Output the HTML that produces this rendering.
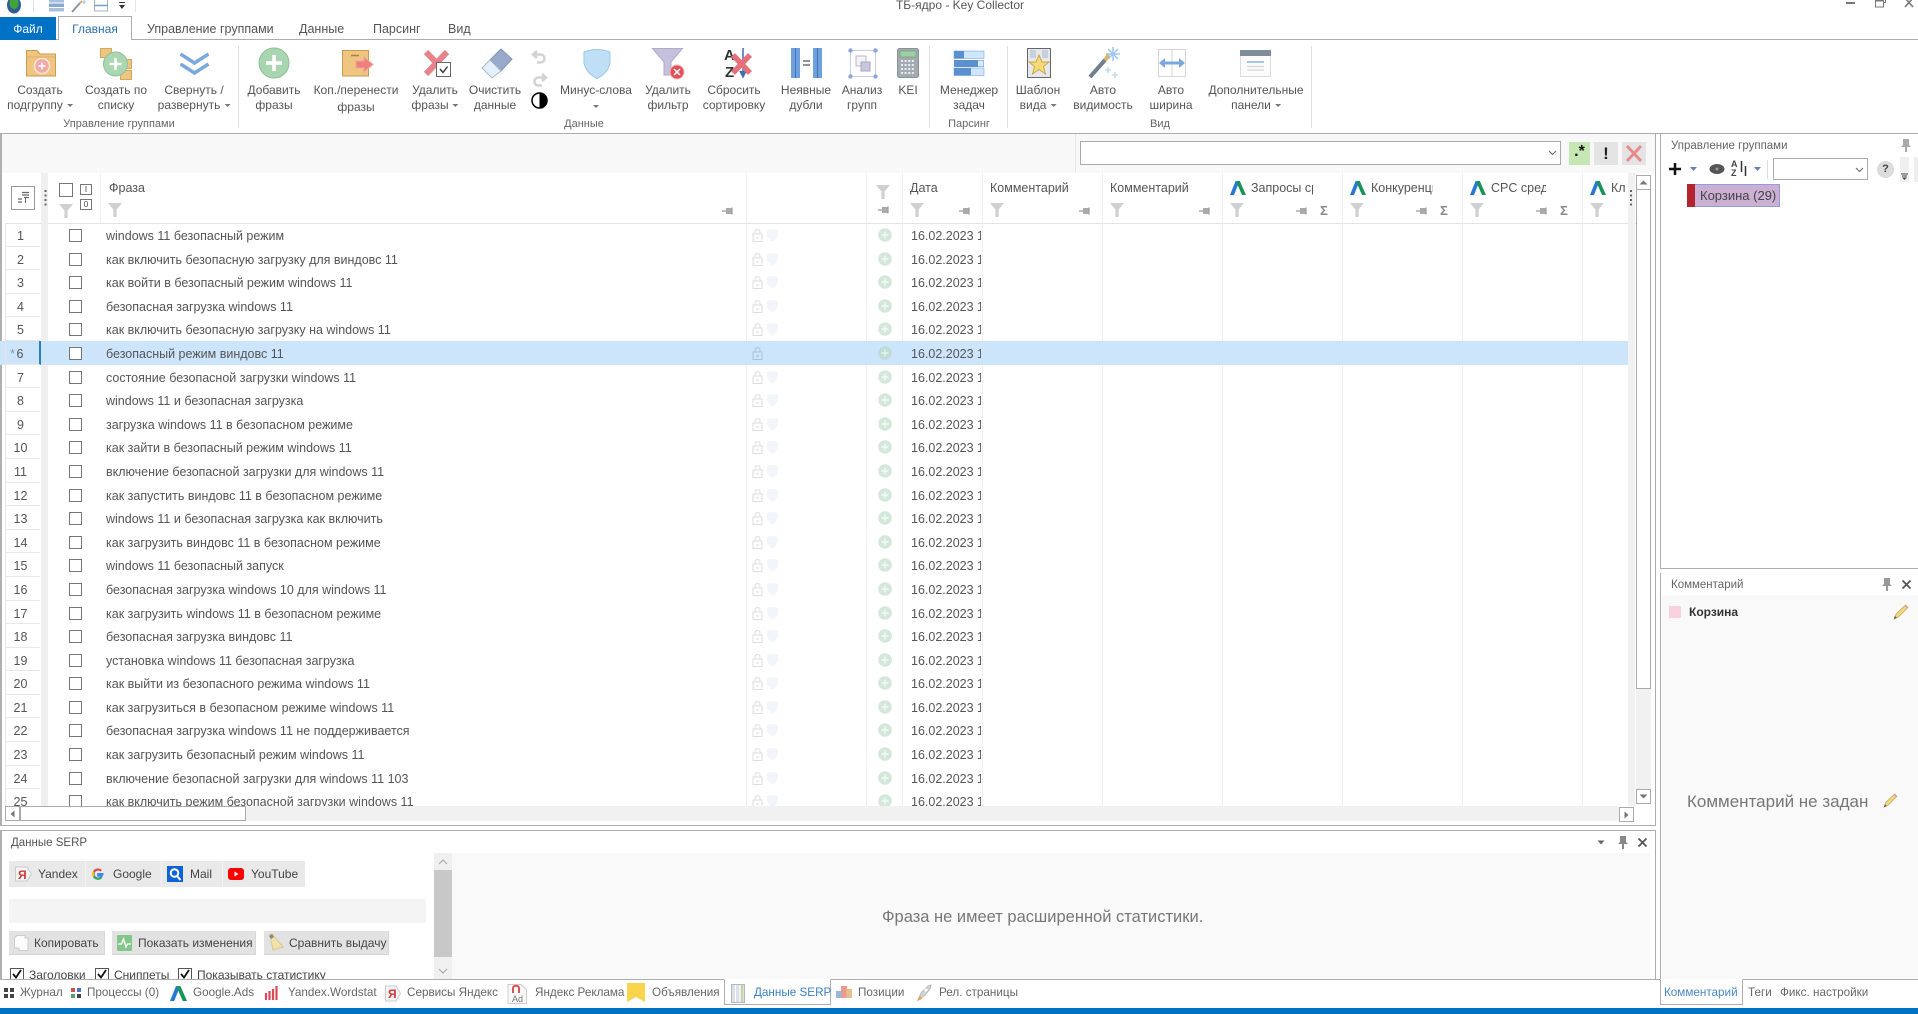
<!DOCTYPE html>
<html lang="ru"><head><meta charset="utf-8"><title>ТБ-ядро - Key Collector</title>
<style>
*{box-sizing:border-box}
html,body{margin:0;padding:0;width:1918px;height:1014px;overflow:hidden;background:#fff;font-family:"Liberation Sans","Noto Sans CJK SC",sans-serif;font-size:12.5px;color:#555}
.a{position:absolute}
.t{position:absolute;white-space:nowrap;line-height:16px}
.u{font-size:11.7px;color:#666}
.w{font-size:12px;color:#444}
.c{transform:translateX(-50%)}
.rl{position:absolute;white-space:nowrap;line-height:16px;transform:translateX(-50%);text-align:center;font-size:12px;color:#555}
.ar{display:inline-block;width:0;height:0;border-left:3px solid transparent;border-right:3px solid transparent;border-top:3px solid #777;vertical-align:middle;margin-left:4px}
svg{position:absolute;overflow:visible}
.h{position:absolute;white-space:nowrap;line-height:16px;font-size:12.5px;color:#555}
.vl{position:absolute;width:1px;background:#f0f0f0}
.btn{position:absolute;background:#e2e2e2;border-bottom:1px solid #d2d2d2;border-right:1px solid #d8d8d8}
#rows{position:absolute;left:0;top:223px;width:1628px;height:583px;overflow:hidden}
.r{position:relative;height:23.6px;width:1628px}
.r .n{position:absolute;left:5px;top:0;width:35px;height:100%;border-bottom:1px solid #e8e8e8;border-left:1px solid #e6e6e6;text-align:center;line-height:26.5px;padding-right:5px;font-size:12.5px;color:#555}
.r .b{position:absolute;left:69px;top:6px;width:13px;height:13px;border:1px solid #777;background:#fff}
.r .p{position:absolute;left:106px;top:0;line-height:26.5px;font-size:12.5px;color:#555;white-space:nowrap}
.r .d{position:absolute;left:911px;top:0;width:70px;overflow:hidden;line-height:26.5px;font-size:12.5px;color:#555;white-space:nowrap}
.r svg.lk{left:752px;top:5px}
.r svg.sh{left:767px;top:5px}
.r svg.pl{left:878px;top:5px}
.s{background:#cde5fb}
.s .n{background:#cde5fb;border-right:2px solid #2f7eb5;width:36px}
</style></head><body>
<svg width="0" height="0" style="position:absolute"><defs>
<symbol id="fl" viewBox="0 0 14 14"><path d="M0 0H14L8.600 6.500V14H5.400V6.500Z" fill="#d0d0d0"/></symbol>
<symbol id="pn" viewBox="0 0 12 10"><path d="M0 5H4M10 1.500V8.500" fill="none" stroke="#9a9a9a" stroke-width="1.200"/><path d="M4 2H9.500V8H4Z" fill="#aaa"/></symbol>
<symbol id="ad" viewBox="0 0 16 16"><path d="M5.600 1H9.600L4 15H0Z" fill="#2a78d6"/><path d="M5.900 1H9.800L16 15H12Z" fill="#17945a"/></symbol>
<symbol id="lk" viewBox="0 0 11 14"><path d="M3 6V3.500C3 1 8 1 8 3.500V6" fill="none" stroke="#dedede"/><rect x="1" y="6" width="9" height="7.500" fill="none" stroke="#dedede"/><rect x="4.500" y="9" width="2" height="2" fill="#e4e4e4"/></symbol>
<symbol id="lks" viewBox="0 0 11 14"><path d="M3 6V3.500C3 1 8 1 8 3.500V6" fill="none" stroke="#a9c4d8"/><rect x="1" y="6" width="9" height="7.500" fill="none" stroke="#a9c4d8"/><rect x="4.500" y="9" width="2" height="2" fill="#a9c4d8"/></symbol>
<symbol id="sh" viewBox="0 0 11 14"><path d="M0 2Q5.500 0 11 2V7Q10 11 5.500 14Q1 11 0 7Z" fill="#f2f6fb"/></symbol>
<symbol id="pl" viewBox="0 0 14 14"><circle cx="7" cy="7" r="6.800" fill="#d3e8da"/><path d="M7 3.500V10.500M3.500 7H10.500" stroke="#f2faf4" stroke-width="1.400"/></symbol>
<symbol id="pls" viewBox="0 0 14 14"><circle cx="7" cy="7" r="6.800" fill="#bcdcd4"/><path d="M7 3.500V10.500M3.500 7H10.500" stroke="#e4f4f4" stroke-width="1.400"/></symbol>
<symbol id="pc" viewBox="0 0 16 16"><path d="M1 15L3 10L12.500 1L15 3.500L5.500 13Z" fill="#f2d67a" stroke="#b9a468" stroke-width=".7"/><path d="M1 15L2 12L4 14Z" fill="#555"/><path d="M12.500 1L15 3.500L14 4.500L11.500 2Z" fill="#e79aa8"/></symbol>
</defs></svg>

<!-- Title bar -->
<svg style="left:6px;top:-3px" width="16" height="17"><ellipse cx="8" cy="8" rx="7" ry="8.500" fill="#2f5f90"/><ellipse cx="8" cy="6" rx="4.500" ry="6" fill="#3fa53a"/></svg>
<div class="vl" style="left:33px;top:0;height:12px;background:#e2e2e2"></div>
<svg style="left:49px;top:0" width="16" height="12"><rect y="-1" width="15" height="3.500" fill="#a9bfdc"/><rect y="3.500" width="15" height="3.500" fill="#8aa9d2"/><rect y="8" width="15" height="3.500" fill="#a9bfdc"/></svg>
<svg style="left:71px;top:0" width="16" height="13"><path d="M1 12L9 3" stroke="#8a96a2" stroke-width="2"/><path d="M9 3L11 1" stroke="#e0b060" stroke-width="2"/><path d="M13 0V4M11 2H15" stroke="#9cc4e8"/></svg>
<svg style="left:94px;top:0" width="14" height="12"><rect x=".5" y="-1" width="13" height="12" fill="#fff" stroke="#a5b4c8"/><path d="M0 5.500H14" stroke="#7d9fcc" stroke-width="1.500"/></svg>
<svg style="left:118px;top:1px" width="8" height="9"><path d="M1 1.500H7" stroke="#333"/><path d="M1 4H7L4 8Z" fill="#333"/></svg>
<div class="vl" style="left:135px;top:0;height:12px;background:#e8e8e8"></div>
<div class="t c" style="left:960px;top:-3px;color:#555;font-size:12px">ТБ-ядро - Key Collector</div>
<div class="a" style="left:1846px;top:2px;width:9px;height:2px;background:#777"></div>
<svg style="left:1875px;top:0" width="11" height="8"><rect x=".5" y="-3" width="8" height="10" fill="#fff" stroke="#777"/><path d="M0 0.500H8.500" stroke="#777" stroke-width="2"/><path d="M9 2.500H10.500V-2" fill="none" stroke="#777"/></svg>
<svg style="left:1904px;top:0" width="10" height="8"><path d="M1 -2L9 7M9 -2L1 7" stroke="#777" stroke-width="1.600"/></svg>

<!-- Tabs -->
<div class="a" style="left:0;top:39px;width:1918px;height:1px;background:#adadad"></div>
<div class="a" style="left:0;top:17px;width:56px;height:23px;background:#0072c6;color:#fff;text-align:center;line-height:24px;font-size:12px">Файл</div>
<div class="a" style="left:58px;top:16px;width:74px;height:24px;background:#fff;border:1px solid #adadad;border-bottom:0;color:#2b6fb0;text-align:center;line-height:25px;font-size:12px">Главная</div>
<div class="t" style="left:147px;top:21px">Управление группами</div>
<div class="t" style="left:299px;top:21px">Данные</div>
<div class="t" style="left:373px;top:21px">Парсинг</div>
<div class="t" style="left:448px;top:21px">Вид</div>

<!-- Ribbon -->
<div class="a" style="left:0;top:133px;width:1918px;height:1px;background:#adadad"></div>
<div class="vl" style="left:238px;top:46px;height:82px;background:#dedede"></div>
<div class="vl" style="left:929px;top:46px;height:82px;background:#dedede"></div>
<div class="vl" style="left:1007px;top:46px;height:82px;background:#dedede"></div>
<div class="vl" style="left:1311px;top:46px;height:82px;background:#dedede"></div>

<!-- 1 -->
<svg style="left:26px;top:50px" width="30" height="27"><path d="M.5 26V.5H11L14 4H29.500V26Z" fill="#efc580" stroke="#c79a55"/><path d="M.5 7H29.500" stroke="#d9ae68"/><circle cx="16" cy="16" r="7.500" fill="#f3a9a6" stroke="#fbe6d8" stroke-width="1.500"/><path d="M16 12.500V19.500M12.500 16H19.500" stroke="#fff" stroke-width="1.500"/></svg>
<div class="rl" style="left:40px;top:82px">Создать<br></div><div class="rl" style="left:40px;top:97px">подгруппу<i class="ar"></i></div>
<!-- 2 -->
<svg style="left:100px;top:48px" width="34" height="32"><rect x=".5" y=".5" width="11" height="9" fill="#efc580" stroke="#d2a760"/><rect x="21.500" y="11.500" width="10" height="9" fill="#efc580" stroke="#d2a760"/><rect x="20.500" y="22.500" width="11" height="9" fill="#efc580" stroke="#d2a760"/><circle cx="15.500" cy="16" r="12" fill="#abd6b2" stroke="#92c09b"/><path d="M15.500 10V22M9.500 16H21.500" stroke="#fff" stroke-width="2.500"/></svg>
<div class="rl" style="left:116px;top:82px">Создать по</div><div class="rl" style="left:116px;top:97px">списку</div>
<!-- 3 -->
<svg style="left:179px;top:52px" width="31" height="23"><path d="M1.500 2L15.500 11L29.500 2M1.500 12L15.500 21L29.500 12" fill="none" stroke="#7ba8dd" stroke-width="3.500"/></svg>
<div class="rl" style="left:194px;top:82px">Свернуть /</div><div class="rl" style="left:194px;top:97px">развернуть<i class="ar"></i></div>
<!-- 4 -->
<svg style="left:258px;top:47px" width="32" height="32"><circle cx="16" cy="16" r="15" fill="#a9d6b0" stroke="#8ebf98"/><path d="M16 8V24M8 16H24" stroke="#fff" stroke-width="3.500"/></svg>
<div class="rl" style="left:274px;top:82px">Добавить</div><div class="rl" style="left:274px;top:97px">фразы</div>
<!-- 5 -->
<svg style="left:342px;top:50px" width="32" height="27"><rect x=".5" y=".5" width="26" height="25.500" fill="#efc580" stroke="#c79a55"/><path d="M9 5.500H17" stroke="#a88148" stroke-width="1.500"/><path d="M14 11H22V7L31 14.500L22 22V18H14Z" fill="#f0807c" stroke="#e9a7a2"/></svg>
<div class="rl" style="left:356px;top:82px">Коп./перенести</div><div class="rl" style="left:356px;top:99px">фразы</div>
<!-- 6 -->
<svg style="left:423px;top:50px" width="29" height="28"><path d="M3 2L24 24M24 2L3 24" stroke="#e9838b" stroke-width="6"/><rect x="13.500" y="12.500" width="14" height="14" fill="#fff" stroke="#666"/><path d="M17 19L20 22.500L24.500 16.500" fill="none" stroke="#333" stroke-width="1.400"/></svg>
<div class="rl" style="left:435px;top:82px">Удалить</div><div class="rl" style="left:435px;top:97px">фразы<i class="ar"></i></div>
<!-- 7 -->
<svg style="left:481px;top:48px" width="32" height="31"><path d="M20 1L31 11L20 23L9 12Z" fill="#98aac9" stroke="#8596b2"/><path d="M9 12L20 23L11 30L1 20Z" fill="#e4f1fb" stroke="#a8b8cc"/></svg>
<div class="rl" style="left:495px;top:82px">Очистить</div><div class="rl" style="left:495px;top:97px">данные</div>
<!-- 8 -->
<svg style="left:531px;top:50px" width="17" height="14"><path d="M6 1L2 4.500L6 8M2 4.500H9C15 4.500 15 12.500 9 12.500H6" fill="none" stroke="#d2d2d2" stroke-width="2.500"/></svg>
<svg style="left:531px;top:73px" width="17" height="14"><path d="M11 1L15 4.500L11 8M15 4.500H8C2 4.500 2 12.500 8 12.500H11" fill="none" stroke="#d2d2d2" stroke-width="2.500"/></svg>
<svg style="left:531px;top:92px" width="17" height="17"><circle cx="8.500" cy="8.500" r="7.500" fill="#fff" stroke="#000" stroke-width="1.500"/><path d="M8.500 1A7.500 7.500 0 0 1 8.500 16Z" fill="#000"/></svg>
<!-- 9 -->
<svg style="left:583px;top:48px" width="28" height="31"><path d="M1 4Q14 -1 27 4V15Q25 25 14 30.500Q3 25 1 15Z" fill="#bfdff6" stroke="#9dc8e6"/></svg>
<div class="rl" style="left:596px;top:82px">Минус-слова</div><div class="a" style="left:593px;top:105px"><i class="ar" style="margin:0;display:block"></i></div>
<!-- 10 -->
<svg style="left:652px;top:48px" width="32" height="32"><path d="M.5 .5H30.500L19 14V27H12V14Z" fill="#c5c1dc" stroke="#aeaac8"/><circle cx="25" cy="24" r="7" fill="#e0505a" stroke="#f2b4b4"/><path d="M22 21L28 27M28 21L22 27" stroke="#fff" stroke-width="1.500"/></svg>
<div class="rl" style="left:668px;top:82px">Удалить</div><div class="rl" style="left:668px;top:97px">фильтр</div>
<!-- 11 -->
<svg style="left:724px;top:47px" width="30" height="32"><text x="0" y="13" font-family="Liberation Sans" font-weight="bold" font-size="15" fill="#333">A</text><text x="1" y="30" font-family="Liberation Sans" font-weight="bold" font-size="15" fill="#333">Z</text><path d="M19 1V28M16 24L19 30L22 24" stroke="#3f6fb0" fill="#3f6fb0" stroke-width="1.500"/><path d="M9 8L26 26M26 8L9 26" stroke="#e5707a" stroke-width="5.500"/></svg>
<div class="rl" style="left:734px;top:82px">Сбросить</div><div class="rl" style="left:734px;top:97px">сортировку</div>
<!-- 12 -->
<svg style="left:791px;top:48px" width="31" height="30"><rect width="9" height="30" fill="#6ea0de"/><rect x="22" width="9" height="30" fill="#6ea0de"/><path d="M4.500 0V30M26.500 0V30" stroke="#3c6fb4" stroke-width=".9"/><path d="M12 13H19M12 17H19" stroke="#555" stroke-width="1.300"/></svg>
<div class="rl" style="left:806px;top:82px">Неявные</div><div class="rl" style="left:806px;top:97px">дубли</div>
<!-- 13 -->
<svg style="left:848px;top:48px" width="30" height="32"><rect x="2.500" y="2.500" width="25" height="26" fill="#fff" stroke="#c5cfe8"/><circle cx="2.500" cy="2.500" r="2.200" fill="#8ea6dc"/><circle cx="27.500" cy="2.500" r="2.200" fill="#8ea6dc"/><circle cx="2.500" cy="28.500" r="2.200" fill="#8ea6dc"/><circle cx="27.500" cy="28.500" r="2.200" fill="#8ea6dc"/><rect x="8" y="8" width="10" height="10" fill="#f4f4f8" stroke="#b8b8c4"/><rect x="13" y="14" width="9" height="9" fill="#cac6de" stroke="#aaa6c0"/></svg>
<div class="rl" style="left:862px;top:82px">Анализ</div><div class="rl" style="left:862px;top:97px">групп</div>
<!-- 14 -->
<svg style="left:897px;top:48px" width="22" height="30"><rect x=".5" y=".5" width="21" height="29" rx="2" fill="#a3abb2" stroke="#8a9299"/><rect x="3" y="3" width="16" height="6" fill="#9fd0a4" stroke="#6f9f78" stroke-width=".7"/><path d="M4 13H18M4 17H18M4 21H18M4 25H18" stroke="#eee" stroke-width="2" stroke-dasharray="2 1.600"/></svg>
<div class="rl" style="left:908px;top:82px">KEI</div>
<!-- 15 -->
<svg style="left:954px;top:51px" width="31" height="25"><rect width="30" height="7.500" fill="#cfe7fb" stroke="#6b9bd3" stroke-width=".5"/><rect width="10" height="7.500" fill="#5a8fd0"/><rect y="9" width="30" height="7" fill="#5a8fd0"/><rect x="24" y="9.500" width="5.500" height="6" fill="#d7ecfb"/><rect y="17" width="30" height="7.500" fill="#cfe7fb" stroke="#6b9bd3" stroke-width=".5"/><rect y="17" width="17" height="7.500" fill="#5a8fd0"/></svg>
<div class="rl" style="left:969px;top:82px">Менеджер</div><div class="rl" style="left:969px;top:97px">задач</div>
<!-- 16 -->
<svg style="left:1027px;top:48px" width="24" height="30"><rect x=".5" y=".5" width="23" height="29" fill="#e6e8ee" stroke="#666"/><rect x="3" y="2" width="6" height="8" fill="#c8d0dc"/><rect x="15" y="2" width="6" height="8" fill="#c8d0dc"/><path d="M12 7L15 14H22L16.500 18.500L18.500 26L12 21.500L5.500 26L7.500 18.500L2 14H9Z" fill="#f6da78" stroke="#c9a845"/></svg>
<div class="rl" style="left:1038px;top:82px">Шаблон</div><div class="rl" style="left:1038px;top:97px">вида<i class="ar"></i></div>
<!-- 17 -->
<svg style="left:1088px;top:47px" width="34" height="33"><path d="M2 30L17 13" stroke="#71808f" stroke-width="4"/><path d="M17 13L21 8" stroke="#e3b35c" stroke-width="4"/><path d="M25 0V14M18 7H32M20 2L30 12M30 2L20 12" stroke="#9cc7ee" stroke-width="1.500"/><path d="M20 20V26M17 23H23M27 25V31M24 28H30" stroke="#b6d6f2" stroke-width="1.300"/></svg>
<div class="rl" style="left:1103px;top:82px">Авто</div><div class="rl" style="left:1103px;top:97px">видимость</div>
<!-- 18 -->
<svg style="left:1157px;top:49px" width="30" height="29"><rect x="1.500" y=".5" width="27" height="27" fill="#fff" stroke="#d5d5d5"/><path d="M15 0V28" stroke="#d5d5d5"/><path d="M2 14L8 9V12.500H22V9L28 14L22 19V15.500H8V19Z" fill="#7aa8dc"/></svg>
<div class="rl" style="left:1171px;top:82px">Авто</div><div class="rl" style="left:1171px;top:97px">ширина</div>
<!-- 19 -->
<svg style="left:1240px;top:50px" width="31" height="27"><rect x=".5" y=".5" width="30" height="26" fill="#fbfbfb" stroke="#dcdcdc"/><rect width="31" height="6" fill="#7f8d9a"/><path d="M7 12H24" stroke="#a8c4e2" stroke-width="2"/><path d="M7 16.500H24M7 20H24" stroke="#d6d6d6" stroke-width="1.300"/></svg>
<div class="rl" style="left:1256px;top:82px">Дополнительные</div><div class="rl" style="left:1256px;top:97px">панели<i class="ar"></i></div>
<!-- group labels -->
<div class="rl" style="left:119px;top:116px;font-size:11px;color:#666">Управление группами</div>
<div class="rl" style="left:584px;top:116px;font-size:11px;color:#666">Данные</div>
<div class="rl" style="left:969px;top:116px;font-size:11px;color:#666">Парсинг</div>
<div class="rl" style="left:1160px;top:116px;font-size:11px;color:#666">Вид</div>

<!-- Main frame -->
<div class="a" style="left:0;top:134px;width:1656px;height:692px;border-left:2px solid #b0b0b0;border-right:1px solid #adadad;border-bottom:1px solid #adadad"></div>
<div class="a" style="left:2px;top:134px;width:1653px;height:39px;background:#f8f8f8"></div>
<div class="vl" style="left:1075px;top:134px;height:38px;background:#e6e6e6"></div>
<div class="a" style="left:1080px;top:141px;width:481px;height:24px;background:#fff;border:1px solid #aaa"></div>
<svg style="left:1548px;top:150px" width="9" height="6"><path d="M1 1L4.500 4.500L8 1" fill="none" stroke="#666"/></svg>
<div class="a" style="left:1569px;top:142px;width:21px;height:23px;background:#c6e7b3;color:#111;font:bold 16px/20px 'Liberation Sans',sans-serif;text-align:center">.*</div>
<div class="a" style="left:1594px;top:142px;width:24px;height:23px;background:#e4e4e4;color:#222;font:bold 17px/23px 'Liberation Sans',sans-serif;text-align:center">!</div>
<div class="a" style="left:1622px;top:142px;width:24px;height:23px;background:#e4e4e4"></div>
<svg style="left:1625px;top:144px" width="18" height="19"><path d="M2 2L16 17M16 2L2 17" stroke="#ea8b8b" stroke-width="3"/></svg>

<!-- Grid header -->
<div class="a" style="left:5px;top:173px;width:1631px;height:51px;background:#fff;border-bottom:1px solid #e4e4e4"></div>
<div class="a" style="left:41px;top:173px;width:7px;height:50px;background:#efefef"></div>
<div class="a" style="left:11px;top:186px;width:24px;height:24px;border:1px solid #999;background:#fff"></div>
<svg style="left:18px;top:192px" width="11" height="12"><path d="M4 .5H11M4 3H11M6 5.500H11M0 7H4M0 10H4" stroke="#666" stroke-width="1.200"/><path d="M7.500 5V11" stroke="#666"/></svg>
<svg style="left:44px;top:190px" width="3" height="16"><path d="M1.500 0V16" stroke="#666" stroke-width="2" stroke-dasharray="2 2.500"/></svg>
<div class="a" style="left:59px;top:183px;width:14px;height:14px;border:1px solid #777;background:#fff"></div>
<div class="a" style="left:80px;top:184px;width:12px;height:11px;border:1px solid #777;background:#fff;font:8px/9px 'Liberation Sans',sans-serif;text-align:center;color:#444">I</div>
<div class="a" style="left:80px;top:199px;width:12px;height:11px;border:1px solid #777;background:#fff;font:8px/9px 'Liberation Sans',sans-serif;text-align:center;color:#444">0</div>
<svg style="left:59px;top:204px" width="14" height="14"><use href="#fl"/></svg>
<div class="h" style="left:109px;top:180px">Фраза</div>
<svg style="left:108px;top:203px" width="14" height="14"><use href="#fl"/></svg>
<svg style="left:722px;top:206px" width="12" height="10"><use href="#pn"/></svg>
<svg style="left:876px;top:185px" width="14" height="14"><use href="#fl"/></svg>
<svg style="left:878px;top:205px" width="12" height="10"><use href="#pn"/></svg>
<div class="h" style="left:910px;top:180px">Дата</div>
<svg style="left:910px;top:203px" width="14" height="14"><use href="#fl"/></svg>
<svg style="left:959px;top:206px" width="12" height="10"><use href="#pn"/></svg>
<div class="h" style="left:990px;top:180px">Комментарий</div>
<svg style="left:990px;top:203px" width="14" height="14"><use href="#fl"/></svg>
<svg style="left:1079px;top:206px" width="12" height="10"><use href="#pn"/></svg>
<div class="h" style="left:1110px;top:180px">Комментарий</div>
<svg style="left:1110px;top:203px" width="14" height="14"><use href="#fl"/></svg>
<svg style="left:1199px;top:206px" width="12" height="10"><use href="#pn"/></svg>
<svg style="left:1230px;top:180px" width="16" height="16"><use href="#ad"/></svg>
<div class="h" style="left:1251px;top:180px;width:62px;overflow:hidden">Запросы средн</div>
<svg style="left:1230px;top:203px" width="14" height="14"><use href="#fl"/></svg>
<svg style="left:1296px;top:206px" width="12" height="10"><use href="#pn"/></svg>
<div class="t" style="left:1320px;top:203px;color:#888;font-size:13px;font-weight:bold">Σ</div>
<svg style="left:1350px;top:180px" width="16" height="16"><use href="#ad"/></svg>
<div class="h" style="left:1371px;top:180px;width:62px;overflow:hidden">Конкуренция</div>
<svg style="left:1350px;top:203px" width="14" height="14"><use href="#fl"/></svg>
<svg style="left:1416px;top:206px" width="12" height="10"><use href="#pn"/></svg>
<div class="t" style="left:1440px;top:203px;color:#888;font-size:13px;font-weight:bold">Σ</div>
<svg style="left:1470px;top:180px" width="16" height="16"><use href="#ad"/></svg>
<div class="h" style="left:1491px;top:180px;width:55px;overflow:hidden">CPC сред.</div>
<svg style="left:1470px;top:203px" width="14" height="14"><use href="#fl"/></svg>
<svg style="left:1536px;top:206px" width="12" height="10"><use href="#pn"/></svg>
<div class="t" style="left:1560px;top:203px;color:#888;font-size:13px;font-weight:bold">Σ</div>
<svg style="left:1590px;top:180px" width="16" height="16"><use href="#ad"/></svg>
<div class="h" style="left:1611px;top:180px;width:15px;overflow:hidden">Клики</div>
<svg style="left:1590px;top:203px" width="14" height="14"><use href="#fl"/></svg>

<!-- Rows -->
<div class="a" style="left:41px;top:223px;width:7px;height:583px;background:#efefef"></div>
<div class="a" style="left:1628px;top:173px;width:7px;height:633px;background:#f1f1f1"></div>
<svg style="left:1629px;top:190px" width="4" height="16"><path d="M2 0V16" stroke="#666" stroke-width="2" stroke-dasharray="2 2.500"/></svg>
<div id="rows">
<div class="r"><div class="n">1</div><i class="b"></i><div class="p">windows 11 безопасный режим</div><svg class="lk" width="11" height="14"><use href="#lk"/></svg><svg class="sh" width="11" height="14"><use href="#sh"/></svg><svg class="pl" width="14" height="14"><use href="#pl"/></svg><div class="d">16.02.2023 12:00</div></div>
<div class="r"><div class="n">2</div><i class="b"></i><div class="p">как включить безопасную загрузку для виндовс 11</div><svg class="lk" width="11" height="14"><use href="#lk"/></svg><svg class="sh" width="11" height="14"><use href="#sh"/></svg><svg class="pl" width="14" height="14"><use href="#pl"/></svg><div class="d">16.02.2023 12:00</div></div>
<div class="r"><div class="n">3</div><i class="b"></i><div class="p">как войти в безопасный режим windows 11</div><svg class="lk" width="11" height="14"><use href="#lk"/></svg><svg class="sh" width="11" height="14"><use href="#sh"/></svg><svg class="pl" width="14" height="14"><use href="#pl"/></svg><div class="d">16.02.2023 12:00</div></div>
<div class="r"><div class="n">4</div><i class="b"></i><div class="p">безопасная загрузка windows 11</div><svg class="lk" width="11" height="14"><use href="#lk"/></svg><svg class="sh" width="11" height="14"><use href="#sh"/></svg><svg class="pl" width="14" height="14"><use href="#pl"/></svg><div class="d">16.02.2023 12:00</div></div>
<div class="r"><div class="n">5</div><i class="b"></i><div class="p">как включить безопасную загрузку на windows 11</div><svg class="lk" width="11" height="14"><use href="#lk"/></svg><svg class="sh" width="11" height="14"><use href="#sh"/></svg><svg class="pl" width="14" height="14"><use href="#pl"/></svg><div class="d">16.02.2023 12:00</div></div>
<div class="r s"><div class="n"><span style="position:absolute;left:4px;color:#8a9aa8">*</span>6</div><i class="b"></i><div class="p">безопасный режим виндовс 11</div><svg class="lk" width="11" height="14"><use href="#lks"/></svg><svg class="pl" width="14" height="14"><use href="#pls"/></svg><div class="d">16.02.2023 12:00</div></div>
<div class="r"><div class="n">7</div><i class="b"></i><div class="p">состояние безопасной загрузки windows 11</div><svg class="lk" width="11" height="14"><use href="#lk"/></svg><svg class="sh" width="11" height="14"><use href="#sh"/></svg><svg class="pl" width="14" height="14"><use href="#pl"/></svg><div class="d">16.02.2023 12:00</div></div>
<div class="r"><div class="n">8</div><i class="b"></i><div class="p">windows 11 и безопасная загрузка</div><svg class="lk" width="11" height="14"><use href="#lk"/></svg><svg class="sh" width="11" height="14"><use href="#sh"/></svg><svg class="pl" width="14" height="14"><use href="#pl"/></svg><div class="d">16.02.2023 12:00</div></div>
<div class="r"><div class="n">9</div><i class="b"></i><div class="p">загрузка windows 11 в безопасном режиме</div><svg class="lk" width="11" height="14"><use href="#lk"/></svg><svg class="sh" width="11" height="14"><use href="#sh"/></svg><svg class="pl" width="14" height="14"><use href="#pl"/></svg><div class="d">16.02.2023 12:00</div></div>
<div class="r"><div class="n">10</div><i class="b"></i><div class="p">как зайти в безопасный режим windows 11</div><svg class="lk" width="11" height="14"><use href="#lk"/></svg><svg class="sh" width="11" height="14"><use href="#sh"/></svg><svg class="pl" width="14" height="14"><use href="#pl"/></svg><div class="d">16.02.2023 12:00</div></div>
<div class="r"><div class="n">11</div><i class="b"></i><div class="p">включение безопасной загрузки для windows 11</div><svg class="lk" width="11" height="14"><use href="#lk"/></svg><svg class="sh" width="11" height="14"><use href="#sh"/></svg><svg class="pl" width="14" height="14"><use href="#pl"/></svg><div class="d">16.02.2023 12:00</div></div>
<div class="r"><div class="n">12</div><i class="b"></i><div class="p">как запустить виндовс 11 в безопасном режиме</div><svg class="lk" width="11" height="14"><use href="#lk"/></svg><svg class="sh" width="11" height="14"><use href="#sh"/></svg><svg class="pl" width="14" height="14"><use href="#pl"/></svg><div class="d">16.02.2023 12:00</div></div>
<div class="r"><div class="n">13</div><i class="b"></i><div class="p">windows 11 и безопасная загрузка как включить</div><svg class="lk" width="11" height="14"><use href="#lk"/></svg><svg class="sh" width="11" height="14"><use href="#sh"/></svg><svg class="pl" width="14" height="14"><use href="#pl"/></svg><div class="d">16.02.2023 12:00</div></div>
<div class="r"><div class="n">14</div><i class="b"></i><div class="p">как загрузить виндовс 11 в безопасном режиме</div><svg class="lk" width="11" height="14"><use href="#lk"/></svg><svg class="sh" width="11" height="14"><use href="#sh"/></svg><svg class="pl" width="14" height="14"><use href="#pl"/></svg><div class="d">16.02.2023 12:00</div></div>
<div class="r"><div class="n">15</div><i class="b"></i><div class="p">windows 11 безопасный запуск</div><svg class="lk" width="11" height="14"><use href="#lk"/></svg><svg class="sh" width="11" height="14"><use href="#sh"/></svg><svg class="pl" width="14" height="14"><use href="#pl"/></svg><div class="d">16.02.2023 12:00</div></div>
<div class="r"><div class="n">16</div><i class="b"></i><div class="p">безопасная загрузка windows 10 для windows 11</div><svg class="lk" width="11" height="14"><use href="#lk"/></svg><svg class="sh" width="11" height="14"><use href="#sh"/></svg><svg class="pl" width="14" height="14"><use href="#pl"/></svg><div class="d">16.02.2023 12:00</div></div>
<div class="r"><div class="n">17</div><i class="b"></i><div class="p">как загрузить windows 11 в безопасном режиме</div><svg class="lk" width="11" height="14"><use href="#lk"/></svg><svg class="sh" width="11" height="14"><use href="#sh"/></svg><svg class="pl" width="14" height="14"><use href="#pl"/></svg><div class="d">16.02.2023 12:00</div></div>
<div class="r"><div class="n">18</div><i class="b"></i><div class="p">безопасная загрузка виндовс 11</div><svg class="lk" width="11" height="14"><use href="#lk"/></svg><svg class="sh" width="11" height="14"><use href="#sh"/></svg><svg class="pl" width="14" height="14"><use href="#pl"/></svg><div class="d">16.02.2023 12:00</div></div>
<div class="r"><div class="n">19</div><i class="b"></i><div class="p">установка windows 11 безопасная загрузка</div><svg class="lk" width="11" height="14"><use href="#lk"/></svg><svg class="sh" width="11" height="14"><use href="#sh"/></svg><svg class="pl" width="14" height="14"><use href="#pl"/></svg><div class="d">16.02.2023 12:00</div></div>
<div class="r"><div class="n">20</div><i class="b"></i><div class="p">как выйти из безопасного режима windows 11</div><svg class="lk" width="11" height="14"><use href="#lk"/></svg><svg class="sh" width="11" height="14"><use href="#sh"/></svg><svg class="pl" width="14" height="14"><use href="#pl"/></svg><div class="d">16.02.2023 12:00</div></div>
<div class="r"><div class="n">21</div><i class="b"></i><div class="p">как загрузиться в безопасном режиме windows 11</div><svg class="lk" width="11" height="14"><use href="#lk"/></svg><svg class="sh" width="11" height="14"><use href="#sh"/></svg><svg class="pl" width="14" height="14"><use href="#pl"/></svg><div class="d">16.02.2023 12:00</div></div>
<div class="r"><div class="n">22</div><i class="b"></i><div class="p">безопасная загрузка windows 11 не поддерживается</div><svg class="lk" width="11" height="14"><use href="#lk"/></svg><svg class="sh" width="11" height="14"><use href="#sh"/></svg><svg class="pl" width="14" height="14"><use href="#pl"/></svg><div class="d">16.02.2023 12:00</div></div>
<div class="r"><div class="n">23</div><i class="b"></i><div class="p">как загрузить безопасный режим windows 11</div><svg class="lk" width="11" height="14"><use href="#lk"/></svg><svg class="sh" width="11" height="14"><use href="#sh"/></svg><svg class="pl" width="14" height="14"><use href="#pl"/></svg><div class="d">16.02.2023 12:00</div></div>
<div class="r"><div class="n">24</div><i class="b"></i><div class="p">включение безопасной загрузки для windows 11 103</div><svg class="lk" width="11" height="14"><use href="#lk"/></svg><svg class="sh" width="11" height="14"><use href="#sh"/></svg><svg class="pl" width="14" height="14"><use href="#pl"/></svg><div class="d">16.02.2023 12:00</div></div>
<div class="r"><div class="n">25</div><i class="b"></i><div class="p">как включить режим безопасной загрузки windows 11</div><svg class="lk" width="11" height="14"><use href="#lk"/></svg><svg class="sh" width="11" height="14"><use href="#sh"/></svg><svg class="pl" width="14" height="14"><use href="#pl"/></svg><div class="d">16.02.2023 12:00</div></div>
</div>
<!-- column lines -->
<div class="vl" style="left:100px;top:173px;height:50px"></div>
<div class="vl" style="left:746px;top:173px;height:633px"></div>
<div class="vl" style="left:866px;top:173px;height:633px"></div>
<div class="vl" style="left:902px;top:173px;height:633px"></div>
<div class="vl" style="left:982px;top:173px;height:633px"></div>
<div class="vl" style="left:1102px;top:173px;height:633px"></div>
<div class="vl" style="left:1222px;top:173px;height:633px"></div>
<div class="vl" style="left:1342px;top:173px;height:633px"></div>
<div class="vl" style="left:1462px;top:173px;height:633px"></div>
<div class="vl" style="left:1582px;top:173px;height:633px"></div>
<div class="a s" style="left:746px;top:341px;width:1px;height:24px"></div><div class="a s" style="left:866px;top:341px;width:1px;height:24px"></div><div class="a s" style="left:902px;top:341px;width:1px;height:24px"></div><div class="a s" style="left:982px;top:341px;width:1px;height:24px"></div><div class="a s" style="left:1102px;top:341px;width:1px;height:24px"></div><div class="a s" style="left:1222px;top:341px;width:1px;height:24px"></div><div class="a s" style="left:1342px;top:341px;width:1px;height:24px"></div><div class="a s" style="left:1462px;top:341px;width:1px;height:24px"></div><div class="a s" style="left:1582px;top:341px;width:1px;height:24px"></div>

<!-- V scrollbar -->
<div class="a" style="left:1636px;top:175px;width:15px;height:628px;background:#f1f1f1"></div>
<div class="a" style="left:1636px;top:175px;width:15px;height:15px;background:#fff;border:1px solid #aaa"></div>
<svg style="left:1639px;top:180px" width="9" height="5"><path d="M.5 4.500H8.500L4.500 .5Z" fill="#777"/></svg>
<div class="a" style="left:1636px;top:189px;width:15px;height:500px;background:#fff;border:1px solid #aaa"></div>
<div class="a" style="left:1636px;top:789px;width:15px;height:15px;background:#fff;border:1px solid #aaa"></div>
<svg style="left:1639px;top:794px" width="9" height="5"><path d="M.5 .5H8.500L4.500 4.500Z" fill="#777"/></svg>
<!-- H scrollbar -->
<div class="a" style="left:5px;top:806px;width:1614px;height:15px;background:#f1f1f1"></div>
<div class="a" style="left:5px;top:806px;width:15px;height:15px;background:#fff;border:1px solid #aaa"></div>
<svg style="left:10px;top:810px" width="5" height="8"><path d="M4.500 .5V7.500L.5 4Z" fill="#777"/></svg>
<div class="a" style="left:20px;top:806px;width:226px;height:15px;background:#fff;border:1px solid #aaa"></div>
<div class="a" style="left:1619px;top:807px;width:15px;height:15px;background:#fff;border:1px solid #aaa"></div>
<svg style="left:1624px;top:811px" width="5" height="8"><path d="M.5 .5V7.500L4.500 4Z" fill="#777"/></svg>

<!-- SERP panel -->
<div class="a" style="left:0;top:830px;width:1656px;height:150px;border:1px solid #adadad;border-left:2px solid #b0b0b0;border-bottom:1px solid #adadad"></div>
<div class="t" style="left:11px;top:835px;font-size:11.5px;color:#555">Данные SERP</div>
<svg style="left:1597px;top:840px" width="8" height="5"><path d="M.5 .5H7.500L4 4.500Z" fill="#666"/></svg>
<svg style="left:1618px;top:836px" width="10" height="13"><path d="M2 0H8V6L10 8H6V13H4V8H0L2 6Z" fill="#888"/></svg>
<svg style="left:1638px;top:838px" width="9" height="9"><path d="M.5 .5L8.500 8.500M8.500 .5L.5 8.500" stroke="#555" stroke-width="1.800"/></svg>
<div class="a" style="left:452px;top:853px;width:1198px;height:126px;background:#f9f9f9"></div>
<div class="t" style="left:882px;top:908px;font-size:16.500px;line-height:18px;color:#777">Фраза не имеет расширенной статистики.</div>
<div class="a" style="left:9px;top:861px;width:296px;height:26px;background:#e9e9e9"></div>
<div class="vl" style="left:85px;top:861px;height:26px;background:#f2f2f2"></div><div class="vl" style="left:161px;top:861px;height:26px;background:#f2f2f2"></div><div class="vl" style="left:222px;top:861px;height:26px;background:#f2f2f2"></div>
<svg style="left:15px;top:866px" width="17" height="16"><path d="M.5 1H12L16.500 8L12 15H.5Z" fill="#f4f4f4" stroke="#ccc"/><text x="3" y="13" font-family="Liberation Sans" font-weight="bold" font-size="12" fill="#d23a3a">Я</text></svg>
<div class="t w" style="left:38px;top:866px">Yandex</div>
<svg style="left:91px;top:867px" width="14" height="14" viewBox="0 0 14 14"><path d="M12.500 7H7.200V8.700H10.800C10.400 10.500 9 11.500 7.200 11.500C4.700 11.500 2.700 9.500 2.700 7C2.700 4.500 4.700 2.500 7.200 2.500" fill="none" stroke="#4285f4" stroke-width="2"/><path d="M2.800 4.700A5 5 0 0 1 10.200 3.800" fill="none" stroke="#ea4335" stroke-width="2"/><path d="M2.700 4.500A5 5 0 0 0 2.700 9.500" fill="none" stroke="#fbbc05" stroke-width="2"/><path d="M2.700 9.500A5 5 0 0 0 10.500 10.300" fill="none" stroke="#34a853" stroke-width="2"/></svg>
<div class="t w" style="left:113px;top:866px">Google</div>
<svg style="left:167px;top:866px" width="16" height="16"><rect width="16" height="16" fill="#0d63d4"/><circle cx="7.500" cy="7" r="3.800" fill="none" stroke="#fff" stroke-width="2"/><path d="M10 10L13.500 14" stroke="#fff" stroke-width="2"/></svg>
<div class="t w" style="left:190px;top:866px">Mail</div>
<svg style="left:228px;top:868px" width="16" height="12"><rect width="16" height="12" rx="3" fill="#f00"/><path d="M6.500 3.500V8.500L10.500 6Z" fill="#fff"/></svg>
<div class="t w" style="left:251px;top:866px">YouTube</div>
<div class="a" style="left:9px;top:899px;width:417px;height:24px;background:#f4f4f4"></div>
<div class="btn" style="left:9px;top:931px;width:96px;height:24px"></div>
<svg style="left:14px;top:935px" width="15" height="16"><path d="M3 .5H11V3H14V15.500H5V13H.5V3Z" fill="#fcfcfc" stroke="#ccc"/></svg>
<div class="t w" style="left:34px;top:935px">Копировать</div>
<div class="btn" style="left:112px;top:931px;width:144px;height:24px"></div>
<svg style="left:117px;top:935px" width="15" height="16"><rect width="15" height="16" rx="1" fill="#84c58a"/><path d="M1 9H4.500L6.500 4L9 12L10.500 9H14" fill="none" stroke="#fff" stroke-width="1.300"/></svg>
<div class="t w" style="left:138px;top:935px">Показать изменения</div>
<div class="btn" style="left:264px;top:931px;width:125px;height:24px"></div>
<svg style="left:268px;top:934px" width="17" height="17"><path d="M2 1L4 0L15 13L5 16Z" fill="#f0e2a8" stroke="#d9c98c"/><path d="M1 2L4 0L6 3L3 5Z" fill="#888"/></svg>
<div class="t w" style="left:289px;top:935px">Сравнить выдачу</div>
<div class="a" style="left:2px;top:960px;width:430px;height:19px;overflow:hidden">
<div class="a" style="left:8px;top:8px;width:14px;height:14px;border:1px solid #555;background:#fff"></div>
<svg style="left:10px;top:9px" width="10" height="10"><path d="M1 5L4 8.500L9 1" fill="none" stroke="#111" stroke-width="1.800"/></svg>
<div class="t w" style="left:27px;top:7px">Заголовки</div>
<div class="a" style="left:93px;top:8px;width:14px;height:14px;border:1px solid #555;background:#fff"></div>
<svg style="left:95px;top:9px" width="10" height="10"><path d="M1 5L4 8.500L9 1" fill="none" stroke="#111" stroke-width="1.800"/></svg>
<div class="t w" style="left:112px;top:7px">Сниппеты</div>
<div class="a" style="left:176px;top:8px;width:14px;height:14px;border:1px solid #555;background:#fff"></div>
<svg style="left:178px;top:9px" width="10" height="10"><path d="M1 5L4 8.500L9 1" fill="none" stroke="#111" stroke-width="1.800"/></svg>
<div class="t w" style="left:195px;top:7px">Показывать статистику</div>
</div>
<div class="a" style="left:434px;top:853px;width:18px;height:126px;background:#f0f0f0"></div>
<div class="a" style="left:434px;top:870px;width:18px;height:87px;background:#c8c8c8"></div>
<svg style="left:438px;top:859px" width="10" height="6"><path d="M1 5L5 1L9 5" fill="none" stroke="#aaa" stroke-width="1.200"/></svg>
<svg style="left:438px;top:968px" width="10" height="6"><path d="M1 1L5 5L9 1" fill="none" stroke="#aaa" stroke-width="1.200"/></svg>

<!-- Right panel -->
<div class="a" style="left:1660px;top:134px;width:258px;height:435px;border-left:1px solid #adadad;border-bottom:1px solid #adadad"></div>
<div class="t" style="left:1671px;top:138px;font-size:11.5px;color:#666">Управление группами</div>
<svg style="left:1901px;top:139px" width="10" height="13"><path d="M2 0H8V6L10 8H6V13H4V8H0L2 6Z" fill="#aaa"/></svg>
<svg style="left:1669px;top:163px" width="12" height="12"><path d="M6 0V12M0 6H12" stroke="#111" stroke-width="2.500"/></svg>
<svg style="left:1690px;top:167px" width="7" height="4"><path d="M0 0H7L3.500 4Z" fill="#6a7fb8"/></svg>
<svg style="left:1709px;top:164px" width="16" height="10"><ellipse cx="8" cy="5" rx="7.500" ry="5" fill="#555"/><circle cx="8" cy="5" r="1.500" fill="#999"/></svg>
<div class="t" style="left:1731px;top:160px;font:bold 9px/9px 'Liberation Sans',sans-serif;color:#444;white-space:normal;width:9px">A<br>Z</div>
<svg style="left:1739px;top:161px" width="9" height="16"><path d="M2.500 0V11M6.500 5V15" stroke="#333" stroke-width="1.500"/></svg>
<svg style="left:1754px;top:167px" width="7" height="4"><path d="M0 0H7L3.500 4Z" fill="#6a7fb8"/></svg>
<div class="vl" style="left:1767px;top:160px;height:19px;background:#ddd"></div>
<div class="a" style="left:1773px;top:158px;width:95px;height:22px;background:#fff;border:1px solid #aaa"></div>
<svg style="left:1855px;top:167px" width="9" height="6"><path d="M1 1L4.500 4.500L8 1" fill="none" stroke="#666"/></svg>
<div class="a" style="left:1877px;top:161px;width:17px;height:17px;border-radius:50%;background:#dcdcdc;color:#444;font:bold 11px/17px 'Liberation Sans',sans-serif;text-align:center">?</div>
<div class="a" style="left:1900px;top:157px;width:9px;height:25px;background:#efefef"></div>
<div class="a" style="left:1914px;top:157px;width:4px;height:25px;background:#efefef"></div>
<svg style="left:1900px;top:173px" width="9" height="7"><path d="M1 1H8M2 3H7" stroke="#444"/><path d="M2 4.500H7L4.500 7Z" fill="#444"/></svg>
<div class="a" style="left:1687px;top:184px;width:8px;height:23px;background:#b3252d"></div>
<div class="a" style="left:1695px;top:184px;width:85px;height:23px;background:#cbb0d4;border:1px solid #8e9ed6;border-left:0;color:#444;font-size:13px;line-height:22px;padding-left:5px;white-space:nowrap">Корзина (29)</div>

<!-- Comment panel -->
<div class="a" style="left:1660px;top:573px;width:1px;height:432px;background:#adadad"></div>
<div class="t" style="left:1671px;top:577px;font-size:11.5px;color:#666">Комментарий</div>
<svg style="left:1882px;top:578px" width="10" height="13"><path d="M2 0H8V6L10 8H6V13H4V8H0L2 6Z" fill="#999"/></svg>
<svg style="left:1902px;top:580px" width="9" height="9"><path d="M.5 .5L8.500 8.500M8.500 .5L.5 8.500" stroke="#555" stroke-width="1.800"/></svg>
<div class="a" style="left:1662px;top:595px;width:256px;height:384px;background:#f9f9f9"></div>
<div class="a" style="left:1669px;top:606px;width:12px;height:12px;background:#f8d0de"></div>
<div class="t" style="left:1689px;top:604px;font-size:12px;font-weight:bold;color:#333">Корзина</div>
<svg style="left:1893px;top:604px" width="16" height="16"><use href="#pc"/></svg>
<div class="t" style="left:1687px;top:792px;font-size:17px;line-height:20px;color:#777">Комментарий не задан</div>
<svg style="left:1883px;top:793px" width="15" height="15"><use href="#pc"/></svg>

<!-- Bottom tabs -->
<div class="a" style="left:0;top:979px;width:1918px;height:1px;background:#adadad"></div>
<svg style="left:4px;top:988px" width="10" height="10"><rect width="4" height="4" fill="#444"/><rect x="6" width="4" height="4" fill="#444"/><rect y="6" width="4" height="4" fill="#444"/><rect x="6" y="6" width="4" height="4" fill="#444"/></svg>
<div class="t u" style="left:20px;top:985px">Журнал</div>
<svg style="left:71px;top:988px" width="10" height="10"><rect width="4" height="4" fill="#d05050"/><rect x="6" width="4" height="4" fill="#5070c8"/><rect y="6" width="4" height="4" fill="#50a070"/><rect x="6" y="6" width="4" height="4" fill="#444"/></svg>
<div class="t u" style="left:87px;top:985px">Процессы (0)</div>
<svg style="left:170px;top:985px" width="17" height="17"><use href="#ad"/></svg>
<div class="t u" style="left:193px;top:985px">Google.Ads</div>
<svg style="left:265px;top:985px" width="14" height="16"><path d="M1 8V15M4.500 6V15M8 4V15M11.500 1V15" stroke="#dc4a55" stroke-width="2.200"/></svg>
<div class="t u" style="left:288px;top:985px">Yandex.Wordstat</div>
<svg style="left:385px;top:985px" width="16" height="17"><path d="M.5 1H11L15.500 8.500L11 16H.5Z" fill="#f4f4f4" stroke="#ccc"/><text x="3" y="13" font-family="Liberation Sans" font-weight="bold" font-size="12" fill="#d23a3a">Я</text></svg>
<div class="t u" style="left:407px;top:985px">Сервисы Яндекс</div>
<svg style="left:507px;top:984px" width="20" height="20"><path d="M1 .5H14L19.500 6V19.500H1Z" fill="#f8f8f8" stroke="#ccc"/><path d="M6 9V4C6 1 12 1 12 4V9" fill="none" stroke="#e05050" stroke-width="2"/><text x="5" y="18" font-family="Liberation Sans" font-size="9" fill="#777">Ad</text></svg>
<div class="t u" style="left:535px;top:985px">Яндекс Реклама</div>
<svg style="left:627px;top:983px" width="18" height="20"><path d="M0 0H18V19L9 14L0 19Z" fill="#fad44a"/></svg>
<div class="t u" style="left:652px;top:985px">Объявления</div>
<div class="a" style="left:724px;top:979px;width:107px;height:26px;background:#fff;border:1px solid #adadad;border-top:1px solid #fff"></div>
<svg style="left:731px;top:984px" width="14" height="19"><rect x=".5" y=".5" width="13" height="18" fill="#dde2e8" stroke="#b0b8c0"/><path d="M4.500 1V18M9 1V18" stroke="#fff"/><path d="M11 1V18" stroke="#c9d39f" stroke-width="2"/></svg>
<div class="t u" style="left:754px;top:985px;color:#3a7fc2">Данные SERP</div>
<svg style="left:836px;top:985px" width="16" height="14"><rect x="5" y="1" width="6" height="12" fill="#ec9a8e"/><rect y="6" width="5.500" height="7" fill="#9ab8dc"/><rect x="10.500" y="4" width="5.500" height="9" fill="#e6c08a"/></svg>
<div class="t u" style="left:858px;top:985px">Позиции</div>
<svg style="left:916px;top:984px" width="16" height="18"><path d="M2 16L5 9L12 2L15 1L14 5L8 12Z" fill="#d4d4d4" stroke="#b8b8b8"/><path d="M1 17L4 12L6 15Z" fill="#e8a040"/><circle cx="10" cy="6" r="1.500" fill="#fff"/></svg>
<div class="t u" style="left:939px;top:985px">Рел. страницы</div>
<div class="a" style="left:1660px;top:979px;width:83px;height:26px;background:#fff;border:1px solid #adadad;border-top:1px solid #fff"></div>
<div class="t u" style="left:1664px;top:985px;color:#4a86c8">Комментарий</div>
<div class="t u" style="left:1748px;top:985px">Теги</div>
<div class="t u" style="left:1780px;top:985px">Фикс. настройки</div>
<!-- Status bar -->
<div class="a" style="left:0;top:1008px;width:1918px;height:6px;background:#0072c6"></div>
</body></html>
